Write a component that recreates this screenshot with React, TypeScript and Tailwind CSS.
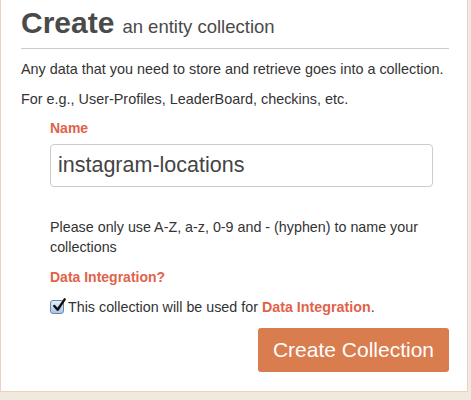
import { useState } from "react";

const orange = "text-[#e0634a]";

function MacCheck({ checked }: { checked: boolean }) {
  return (
    <span className="relative inline-block h-[14px] w-[14px] shrink-0 rounded-[3px] border border-[#6b86ad] bg-gradient-to-b from-[#e4eefb] to-[#a9c6ec]">
      {checked && (
        <svg
          viewBox="0 0 16 16"
          className="absolute -top-[3px] left-[1px] h-[15px] w-[15px]"
        >
          <path
            d="M2.5 8.5 L6 12.5 L13.5 1.5"
            fill="none"
            stroke="#111"
            strokeWidth="2.6"
            strokeLinecap="round"
            strokeLinejoin="round"
          />
        </svg>
      )}
    </span>
  );
}

export default function App() {
  const [name, setName] = useState("instagram-locations");
  const [integrate, setIntegrate] = useState(true);

  return (
    <div className="h-[400px] w-[471px] bg-[#efe9de] font-['Liberation_Sans',Arial,sans-serif]">
      <div className="h-[392px] w-[468px] border-x border-b border-[#f2cdc4] bg-white pl-[20px] pr-[18px] pt-[8px]">
        <h1 className="flex items-baseline gap-[8px] border-b border-[#cccccc] pb-[6px] leading-[30px] text-[#4a4a4a]">
          <span className="text-[30px] font-bold">Create</span>
          <span className="text-[18.5px] font-normal">an entity collection</span>
        </h1>

        <p className="mt-[10px] text-[14.4px] leading-[20px] text-[#333]">
          Any data that you need to store and retrieve goes into a collection.
        </p>
        <p className="mt-[10px] text-[14.4px] leading-[20px] text-[#333]">
          For e.g., User-Profiles, LeaderBoard, checkins, etc.
        </p>

        <div className="pl-[29px]">
          <label className={`mt-[9px] block text-[14px] font-bold leading-[20px] ${orange}`}>
            Name
          </label>
          <input
            value={name}
            onChange={(e) => setName(e.target.value)}
            className="mt-[6px] block h-[43px] w-[383px] rounded-[4px] border border-[#cccccc] pl-[7px] text-[21.5px] text-[#444] outline-none"
          />

          <p className="mt-[30px] w-[390px] text-[14.3px] leading-[20px] text-[#333]">
            Please only use A-Z, a-z, 0-9 and - (hyphen) to name your collections
          </p>

          <div className={`mt-[10px] text-[14px] font-bold leading-[20px] ${orange}`}>
            Data Integration?
          </div>

          <label
            className="mt-[10px] flex cursor-pointer items-center gap-[4px] text-[14.3px] leading-[20px] text-[#333]"
            onClick={() => setIntegrate((v) => !v)}
          >
            <MacCheck checked={integrate} />
            <span>
              This collection will be used for{" "}
              <span className={`font-bold ${orange}`}>Data Integration</span>.
            </span>
          </label>

          <div className="mt-[11px] flex justify-end">
            <button className="h-[44px] w-[191px] rounded-[3px] bg-[#d97c4e] text-[21px] text-white">
              Create Collection
            </button>
          </div>
        </div>
      </div>
    </div>
  );
}
